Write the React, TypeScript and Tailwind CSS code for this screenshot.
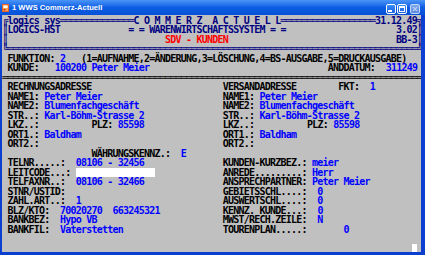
import React from "react";

type C = "k" | "b" | "r" | "n" | "box" | "cur";
type Seg = [number, string, C?];

const colorCls: Record<string, string> = {
  k: "text-[#000000]",
  b: "text-[#0000ff]",
  r: "text-[#ff0000]",
  n: "text-[#000080]",
};

const dbl = (n: number) => "═".repeat(n);

const rows: Seg[][] = [
  [[0, "╔", "n"], [1, "logics sys", "n"], [11, dbl(14), "n"], [25, "C O M M E R Z  A C T U E L L", "n"], [53, dbl(18), "n"], [71, "31.12.49", "n"], [79, "╗", "n"]],
  [[0, "║", "n"], [1, "LOGICS-HST", "n"], [24, "= = WARENWIRTSCHAFTSSYSTEM = =", "n"], [75, "3.02", "n"], [79, "║", "n"]],
  [[0, "║", "n"], [31, "SDV - KUNDEN", "r"], [75, "BB-3", "n"], [79, "║", "n"]],
  [[0, "╚", "n"], [1, dbl(78), "n"], [79, "╝", "n"]],
  [[1, "FUNKTION:"], [11, "2", "b"], [15, "(1=AUFNAHME,2=ÄNDERUNG,3=LÖSCHUNG,4=BS-AUSGABE,5=DRUCKAUSGABE)"]],
  [[1, "KUNDE:"], [10, "100200 Peter Meier", "b"], [62, "ÄNDDATUM:"], [73, "311249", "b"]],
  [[0, dbl(80)]],
  [[1, "RECHNUNGSADRESSE"], [42, "VERSANDADRESSE"], [64, "FKT:"], [70, "1", "b"]],
  [[1, "NAME1:"], [8, "Peter Meier", "b"], [42, "NAME1:"], [49, "Peter Meier", "b"]],
  [[1, "NAME2:"], [8, "Blumenfachgeschäft", "b"], [42, "NAME2:"], [49, "Blumenfachgeschäft", "b"]],
  [[1, "STR..:"], [8, "Karl-Böhm-Strasse 2", "b"], [42, "STR..:"], [49, "Karl-Böhm-Strasse 2", "b"]],
  [[1, "LKZ..:"], [17, "PLZ:"], [22, "85598", "b"], [42, "LKZ..:"], [58, "PLZ:"], [63, "85598", "b"]],
  [[1, "ORT1.:"], [8, "Baldham", "b"], [42, "ORT1.:"], [49, "Baldham", "b"]],
  [[1, "ORT2.:"], [42, "ORT2.:"]],
  [[17, "WÄHRUNGSKENNZ.:"], [34, "E", "b"]],
  [[1, "TELNR.....:"], [14, "08106 - 32456", "b"], [42, "KUNDEN-KURZBEZ.:"], [59, "meier", "b"]],
  [[1, "LEITCODE...:"], [14, "               ", "box"], [42, "ANREDE.........:"], [59, "Herr", "b"]],
  [[1, "TELFAXNR..:"], [14, "08106 - 32466", "b"], [42, "ANSPRECHPARTNER:"], [59, "Peter Meier", "b"]],
  [[1, "STNR/USTID:"], [42, "GEBIETSSCHL....:"], [60, "0", "b"]],
  [[1, "ZAHL.ART..:"], [14, "1", "b"], [42, "AUSWERTSCHL....:"], [60, "0", "b"]],
  [[1, "BLZ/KTO:"], [11, "70020270", "b"], [21, "663245321", "b"], [42, "KENNZ. KUNDE...:"], [60, "0", "b"]],
  [[1, "BANKBEZ:"], [11, "Hypo VB", "b"], [42, "MWST/RECH.ZEILE:"], [60, "N", "b"]],
  [[1, "BANKFIL:"], [11, "Vaterstetten", "b"], [42, "TOURENPLAN.....:"], [65, "0", "b"]],
  [],
  [[78, " ", "cur"]],
];

function Row({ segs }: { segs: Seg[] }) {
  const out: React.ReactNode[] = [];
  let cur = 0;
  segs.forEach(([col, text, c], i) => {
    if (col > cur) out.push(<span key={"s" + i}>{" ".repeat(col - cur)}</span>);
    if (c === "box" || c === "cur") {
      out.push(
        <span key={i} className="inline-block h-[9.5px] bg-white align-top">
          {text}
        </span>
      );
    } else {
      out.push(
        <span key={i} className={colorCls[c || "k"]}>
          {text}
        </span>
      );
    }
    cur = col + text.length;
  });
  return <div className="h-[9.5px] leading-[9.5px] whitespace-pre">{out}</div>;
}

export default function App() {
  return (
    <div className="w-[425px] h-[255px] flex flex-col bg-[#0a3fd0] overflow-hidden">
      <div className="h-[15px] shrink-0 flex items-center bg-linear-to-b from-[#4a95f8] via-[#0c5de4] to-[#0651d6] pl-[2px] pr-[5px]">
        <svg width="7" height="8" viewBox="0 0 7 8" className="shrink-0">
          <rect x="0" y="0" width="7" height="8" fill="#e8612a" />
          <rect x="1" y="1" width="5" height="6" fill="#f8a050" />
          <rect x="1.5" y="1.5" width="4" height="2.5" fill="#ffffff" />
          <rect x="1.5" y="5" width="2" height="1.5" fill="#c03010" />
        </svg>
        <span
          className="ml-[3px] text-white font-bold text-[7.6px] leading-none"
          style={{ fontFamily: '"Liberation Sans", "DejaVu Sans", sans-serif' }}
        >
          1 WWS Commerz-Actuell
        </span>
        <div className="ml-auto flex gap-[1px] items-center pt-[2px]">
          <div className="w-[10px] h-[10px] rounded-[2px] border border-white bg-linear-to-b from-[#3c8cf8] to-[#1a5fe0] flex items-end pl-[1px] pb-[1px]">
            <div className="w-[4px] h-[2px] bg-white" />
          </div>
          <div className="w-[10px] h-[10px] rounded-[2px] border border-white bg-linear-to-b from-[#3c8cf8] to-[#1a5fe0] flex items-center justify-center">
            <div className="w-[6px] h-[6px] border border-white border-t-2" />
          </div>
          <div className="ml-[2px] w-[10px] h-[10px] rounded-[2px] border border-[#c8d8f8] bg-linear-to-b from-[#7aa8f0] to-[#5a88e0] flex items-center justify-center">
            <svg width="6" height="6" viewBox="0 0 6 6">
              <path d="M1 1 L5 5 M5 1 L1 5" stroke="#b8ccf0" strokeWidth="1.2" />
            </svg>
          </div>
        </div>
      </div>
      <div className="flex-1 pl-[2px] pr-[4px] pb-[3px] min-h-0">
        <div
          className="h-full bg-[#c0c0c0] overflow-hidden pt-[0.5px] pl-[0.25px] text-[10px] font-bold tracking-[-0.77px] text-black"
          style={{ fontFamily: '"DejaVu Sans Mono", "Liberation Mono", monospace' }}
        >
          {rows.map((r, i) => (
            <Row key={i} segs={r} />
          ))}
        </div>
      </div>
    </div>
  );
}
